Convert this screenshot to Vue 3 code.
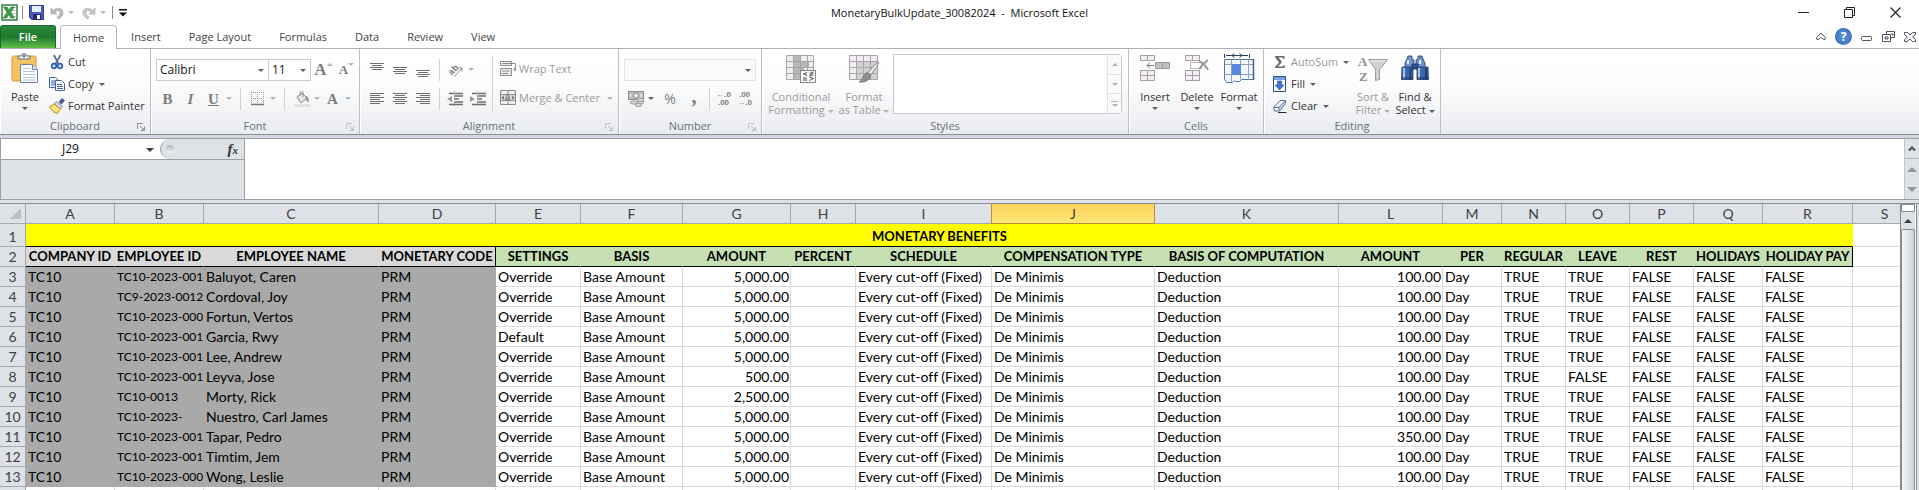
<template>
  <div class="xl-app">
    <header class="title-bar">
      <div class="quick-access">
        <svg class="xl-logo" width="17" height="17" viewBox="0 0 17 17" aria-hidden="true">
          <rect x="1" y="1" width="15" height="15" fill="#fff" stroke="#1d7a38" stroke-width="1.4" />
          <path d="M10 3.5h5M10 6.5h5M10 9.5h5M10 12.5h5" stroke="#a9cfae" />
          <path d="M2.500 3h3.600l1.900 3.200L10 3h3.200L9.800 8.300l3.600 5.700H9.800L7.800 10.500 5.700 14H2.300l3.700-5.700z" fill="#3f9f3f" stroke="#16692f" stroke-width=".6" />
        </svg>
        <i class="qa-sep"></i>
        <button type="button" class="qa-btn" aria-label="Save">
          <svg width="15" height="15" viewBox="0 0 15 15">
            <path d="M.5.5h14v14h-12l-2-2z" fill="#4a58c4" stroke="#303b94" />
            <rect x="3" y="1" width="9" height="6" fill="#e8f0fb" />
            <rect x="4" y="9" width="8" height="6" fill="#252c66" />
            <rect x="8" y="10" width="3" height="4" fill="#fff" />
          </svg>
        </button>
        <button type="button" class="qa-btn qa-undo" aria-label="Undo">
          <svg width="14" height="14" viewBox="0 0 14 14">
            <path d="M1 2v6h6L5 6c2-2 5-1.500 5 1 0 2-1.500 3-3 4l1.500 2C11 11.500 13 10 13 6.500 13 2 7.500.500 3.300 4.300z" fill="#b9bbbe" stroke="#a3a5a9" stroke-width=".6" />
          </svg>
          <i class="caret off"></i>
        </button>
        <button type="button" class="qa-btn qa-undo" aria-label="Redo">
          <svg width="14" height="14" viewBox="0 0 14 14">
            <path d="M13 2v6H7l2-2C7 4 4 4.500 4 7c0 2 1.500 3 3 4l-1.500 2C3 11.500 1 10 1 6.500 1 2 6.500.500 10.700 4.300z" fill="#c6c8ca" stroke="#a3a5a9" stroke-width=".6" />
          </svg>
          <i class="caret off"></i>
        </button>
        <i class="qa-sep"></i>
        <button type="button" class="qa-btn" aria-label="Customize Quick Access Toolbar">
          <svg width="8" height="8" viewBox="0 0 8 8"><path d="M0 0h8v1.500H0zM0 3.500h8L4 7.500z" fill="#111" /></svg>
        </button>
      </div>
      <h1 class="doc-title">MonetaryBulkUpdate_30082024&nbsp; -&nbsp; Microsoft Excel</h1>
      <div class="win-controls">
        <button type="button" aria-label="Minimize"><svg width="11" height="11"><path d="M0 5.500h11" stroke="#222" /></svg></button>
        <button type="button" aria-label="Restore">
          <svg width="11" height="11" fill="none" stroke="#222"><path d="M.5 2.500h8v8h-8zM2.500 2.500v-2h8v8h-2" /></svg>
        </button>
        <button type="button" aria-label="Close"><svg width="11" height="11"><path d="M.5.500l10 10M10.500.500l-10 10" stroke="#222" stroke-width="1.200" /></svg></button>
      </div>
    </header>

    <nav class="tab-row">
      <button type="button" class="tab tab-file">File</button>
      <button v-for="t in tabs" :key="t" type="button" class="tab" :class="{ active: t === activeTab }" @click="activeTab = t">{{ t }}</button>
      <div class="doc-controls">
        <button type="button" aria-label="Minimize the Ribbon">
          <svg width="10" height="9" viewBox="0 0 10 9"><path d="M.7 5.300L5 1l4.300 4.300v2H7L5 5.300 3 7.300H.7z" fill="#fff" stroke="#4c5560" /></svg>
        </button>
        <button type="button" class="help" aria-label="Help">?</button>
        <button type="button" aria-label="Minimize window">
          <svg width="12" height="9" viewBox="0 0 12 9"><rect x=".5" y="4.500" width="10" height="4" rx="1" fill="#fff" stroke="#4c5560" /></svg>
        </button>
        <button type="button" aria-label="Restore window">
          <svg width="13" height="11" viewBox="0 0 13 11" fill="#fff" stroke="#4c5560"><path d="M4.500.5h8v6h-8z" /><path d="M.5 3.500h8v7h-8z" /><path d="M3 6h3v2H3z" /><path d="M9 3h2v2" /></svg>
        </button>
        <button type="button" aria-label="Close window">
          <svg width="12" height="10" viewBox="0 0 12 10"><path d="M.5.5h3L6 3 8.500.5h3v2L8.500 5l3 2.500v2h-3L6 7 3.500 9.500h-3v-2L3.500 5l-3-2.500z" fill="#fff" stroke="#4c5560" /></svg>
        </button>
      </div>
    </nav>

    <section class="ribbon">
      <div class="group g-clipboard">
        <div class="group-body">
          <button type="button" class="big">
            <svg width="28" height="32" viewBox="0 0 28 32">
              <rect x="1" y="4" width="24" height="25" rx="1.500" fill="#f3c366" stroke="#d99a3a" />
              <path d="M7 7V4h3c0-3 6-3 6 0h3v3z" fill="#dfe3e8" stroke="#6b7480" />
              <circle cx="13" cy="4" r="1.200" fill="#5c6570" />
              <path d="M9.500 12.500h12l5 5v13h-17z" fill="#fbfcff" stroke="#6f87a6" />
              <path d="M21.500 12.500v5h5" fill="#d6e2f2" stroke="#6f87a6" />
              <path d="M12 16.500h7M12 19.500h12M12 22.500h12M12 25.500h12M12 28h12" stroke="#b7c6da" />
            </svg>
            <span>Paste</span>
            <i class="caret"></i>
          </button>
          <div class="stack">
            <button type="button" class="small">
              <svg width="16" height="16" viewBox="0 0 16 16">
                <path d="M5 1l4.500 9M11.500 1L6.500 10" stroke="#5d7188" stroke-width="1.800" />
                <circle cx="5" cy="12" r="2.300" fill="#dbe7f8" stroke="#2a5db0" stroke-width="1.700" />
                <circle cx="11" cy="12" r="2.300" fill="#dbe7f8" stroke="#2a5db0" stroke-width="1.700" />
              </svg>
              <span>Cut</span>
            </button>
            <button type="button" class="small">
              <svg width="16" height="16" viewBox="0 0 16 16" stroke="#3b66a8">
                <path d="M.5 1.500h6l3 3v7h-9z" fill="#eef4fc" /><path d="M2 5h4M2 7h4M2 9h4" />
                <path d="M6.500 4.500h6l3 3v7h-9z" fill="#fff" /><path d="M8 8.500h5M8 10.500h6M8 12.500h6" />
              </svg>
              <span>Copy</span><i class="caret"></i>
            </button>
            <button type="button" class="small">
              <svg width="16" height="16" viewBox="0 0 16 16">
                <path d="M10 4l3-3.500 2.500 2L12.500 6z" fill="#4c5ea5" stroke="#36437b" stroke-width=".7" />
                <path d="M7 3.500l6.500 5-2 2.500L5 6z" fill="#d7d9de" stroke="#666d78" stroke-width=".7" />
                <path d="M5 6l6.500 5-3 4.500C5 15 2 12.500.5 8.500z" fill="#f6dc62" stroke="#ab8a20" stroke-width=".8" />
                <path d="M3 9l4.500 4.500M5 8l5 4" stroke="#fff6bd" />
              </svg>
              <span>Format Painter</span>
            </button>
          </div>
        </div>
        <div class="group-label">Clipboard<button type="button" class="launcher" aria-label="Clipboard options"><svg width="8" height="8"><path :d="launcherPath" /></svg></button></div>
      </div>

      <div class="group g-font">
        <div class="group-body rows">
          <div class="row">
            <div class="combo font-name">
              <select aria-label="Font"><option>Calibri</option></select><i class="caret"></i>
            </div>
            <div class="combo font-size">
              <select aria-label="Font size"><option>11</option></select><i class="caret"></i>
            </div>
            <button type="button" class="tool glyph grow" aria-label="Increase font size"><b>A</b><i class="caret up off"></i></button>
            <button type="button" class="tool glyph shrink" aria-label="Decrease font size"><b>A</b><i class="caret off"></i></button>
          </div>
          <div class="row">
            <button type="button" class="tool glyph"><b>B</b></button>
            <button type="button" class="tool glyph"><b><em>I</em></b></button>
            <button type="button" class="tool glyph"><b><u>U</u></b></button>
            <i class="caret off"></i>
            <i class="v-sep"></i>
            <button type="button" class="tool" aria-label="Borders">
              <svg width="14" height="14" viewBox="0 0 14 14"><path d="M.5 0v12M6.500 0v12M12.500 0v12M0 .5h13M0 6.500h13" stroke="#999" stroke-dasharray="1 1" /><path d="M0 12.500h13" stroke="#777" stroke-width="1.500" /></svg>
            </button>
            <i class="caret off"></i>
            <i class="v-sep"></i>
            <button type="button" class="tool" aria-label="Fill color">
              <svg width="16" height="16" viewBox="0 0 16 16">
                <path d="M3 6l5-4 5 5-6 5z" fill="#e6e6e6" stroke="#888" />
                <path d="M6 5V1.500c0-1.500 3-1.500 3 0V6" fill="none" stroke="#888" />
                <path d="M12 5c3 1 3 4 2.500 7-1.500-1-1-3-3-4z" fill="#8f8f8f" />
                <path d="M0 13h16v3H0z" fill="#e6dfe6" />
              </svg>
            </button>
            <i class="caret off"></i>
            <button type="button" class="tool glyph" aria-label="Font color"><b>A</b></button>
            <i class="caret off"></i>
          </div>
        </div>
        <div class="group-label">Font<button type="button" class="launcher off" aria-label="Font options"><svg width="8" height="8"><path :d="launcherPath" /></svg></button></div>
      </div>

      <div class="group g-align">
        <div class="group-body">
          <div class="align-rows">
            <div class="row">
              <button v-for="a in vAligns" :key="a.name" type="button" class="tool" :aria-label="a.name">
                <svg width="15" height="16"><path :d="a.d" stroke="#6f6f6f" /></svg>
              </button>
              <i class="v-sep"></i>
              <button type="button" class="tool" aria-label="Orientation">
                <svg width="17" height="16" viewBox="0 0 17 16"><text x="1" y="11" transform="rotate(-45 6 8)" class="ab">ab</text><path d="M7 15L15 6M15 6h-3.500M15 6v3.500" fill="none" stroke="#8c8c8c" /></svg>
              </button>
              <i class="caret off"></i>
            </div>
            <div class="row">
              <button v-for="a in hAligns" :key="a.name" type="button" class="tool" :aria-label="a.name">
                <svg width="15" height="16"><path :d="a.d" stroke="#6f6f6f" /></svg>
              </button>
              <i class="v-sep"></i>
              <button type="button" class="tool" aria-label="Decrease indent">
                <svg width="17" height="16" viewBox="0 0 17 16"><path d="M2 2.500h14M7 5h9M7 8h5M7 11h9M2 13.500h14" stroke="#6f6f6f" stroke-width="1.500" /><path d="M7.500 0v16" stroke="#aaa" stroke-dasharray="1 1" /><path d="M5 5v6L0 8z" fill="#9a9a9a" /></svg>
              </button>
              <button type="button" class="tool" aria-label="Increase indent">
                <svg width="17" height="16" viewBox="0 0 17 16"><path d="M2 2.500h14M7 5h9M7 8h5M7 11h9M2 13.500h14" stroke="#6f6f6f" stroke-width="1.500" /><path d="M7.500 0v16" stroke="#aaa" stroke-dasharray="1 1" /><path d="M0 5v6l5-3z" fill="#9a9a9a" /></svg>
              </button>
            </div>
          </div>
          <i class="v-sep tall"></i>
          <div class="wrap-rows">
            <button type="button" class="small off">
              <svg width="17" height="16" viewBox="0 0 17 16" fill="#eee" stroke="#8d8d8d"><path d="M.5.500h11v4H.5zM.5 7.500h11v7H.5z" /><path d="M2 2.500h13.500M2 10h8M2 12.500h6" /><path d="M15.500 3v6.500l-2.500-1M15.500 9.500l-1-3" fill="none" /></svg>
              <span>Wrap Text</span>
            </button>
            <button type="button" class="small off">
              <svg width="17" height="16" viewBox="0 0 17 16"><path d="M.5.500h15v14H.5z" fill="#ededed" stroke="#8d8d8d" /><path d="M.5 4.500h15M.5 10.500h15M8 .5v4M8 10.500v4" stroke="#8d8d8d" /><path d="M1 5h14v5H1z" fill="#d5d5d5" /><path d="M4 6v3.500L1.500 7.700zM12 6v3.500l2.500-1.800z" fill="#666" /><text x="5" y="10" class="ab">a</text></svg>
              <span>Merge &amp; Center</span><i class="caret off"></i>
            </button>
          </div>
        </div>
        <div class="group-label">Alignment<button type="button" class="launcher off" aria-label="Alignment options"><svg width="8" height="8"><path :d="launcherPath" /></svg></button></div>
      </div>

      <div class="group g-number">
        <div class="group-body rows">
          <div class="row">
            <div class="combo off">
              <select aria-label="Number format"><option></option></select><i class="caret"></i>
            </div>
          </div>
          <div class="row">
            <button type="button" class="tool" aria-label="Accounting format">
              <svg width="17" height="16" viewBox="0 0 17 16"><rect x=".5" y=".5" width="15" height="8" fill="#bcbcbc" stroke="#8c8c8c" /><circle cx="8" cy="4.500" r="2.500" fill="#ececec" stroke="#888" /><path d="M2.500 3v3M13 3v3" stroke="#fff" /><g fill="#ddd" stroke="#999"><ellipse cx="10.500" cy="14" rx="3.500" ry="1.500" /><ellipse cx="5.500" cy="11.500" rx="3.500" ry="1.500" /><ellipse cx="12.500" cy="11" rx="3.500" ry="1.500" /><ellipse cx="12.500" cy="9" rx="3.500" ry="1.500" /></g></svg>
            </button>
            <i class="caret"></i>
            <button type="button" class="tool sign">%</button>
            <button type="button" class="tool glyph comma"><b>,</b></button>
            <i class="v-sep"></i>
            <button type="button" class="tool dec" aria-label="Increase decimal"><span>←.0</span><span>.00</span></button>
            <button type="button" class="tool dec" aria-label="Decrease decimal"><span>.00</span><span>→.0</span></button>
          </div>
        </div>
        <div class="group-label">Number<button type="button" class="launcher off" aria-label="Number options"><svg width="8" height="8"><path :d="launcherPath" /></svg></button></div>
      </div>

      <div class="group g-styles">
        <div class="group-body">
          <button type="button" class="big wide off">
            <svg width="32" height="32" viewBox="0 0 32 32">
              <path d="M1.500 3.500h27v24h-27z" fill="#f1ecf1" />
              <path d="M8 4h7v23H8zM15 10h9v5h-9zM15 15h4v6h-4z" fill="#b9b6b9" />
              <path d="M1.500 3.500h27v24h-27zM8.500 3.500v24M15.500 3.500v24M22.500 3.500v24M1.500 9.500h27M1.500 15.500h27M1.500 21.500h27" fill="none" stroke="#a9a6a9" />
              <rect x="15.500" y="18.500" width="15" height="12" fill="#f5f5f5" stroke="#8a8a8a" />
              <path d="M22 20.500l-3.500 1.500 3.500 1.500M18 26h4M18 28h4M24.500 21h4M24.500 23h4M28 19.500l-3 5M24.500 25l4 1.500-4 2" fill="none" stroke="#555" />
            </svg>
            <span>Conditional</span>
            <span>Formatting <i class="caret off"></i></span>
          </button>
          <button type="button" class="big off">
            <svg width="32" height="32" viewBox="0 0 32 32">
              <path d="M1.500 3.500h28v24h-28z" fill="#f1ecf1" />
              <path d="M9 10h20v17H9z" fill="#d2d0d2" />
              <path d="M1.500 3.500h28v24h-28zM8.500 3.500v24M15.500 3.500v24M22.500 3.500v24M1.500 9.500h28M1.500 15.500h28M1.500 21.500h28" fill="none" stroke="#a9a6a9" />
              <path d="M30.500 10l-1 4-7 9-3-2.500 8-8.500z" fill="#e5e5e5" stroke="#888" />
              <path d="M19.500 20.500l3 2.500c0 5-5 7.500-11.500 7 4-1.500 3-7 8.500-9.500z" fill="#8e8e8e" stroke="#7b7b7b" />
            </svg>
            <span>Format</span>
            <span>as Table <i class="caret off"></i></span>
          </button>
          <div class="gallery">
            <div class="gallery-view"></div>
            <div class="gallery-nav">
              <button type="button" aria-label="Previous styles"><i class="caret up off"></i></button>
              <button type="button" aria-label="Next styles"><i class="caret off"></i></button>
              <button type="button" aria-label="More styles"><i class="bar"></i><i class="caret off"></i></button>
            </div>
          </div>
        </div>
        <div class="group-label">Styles</div>
      </div>

      <div class="group g-cells">
        <div class="group-body">
          <button type="button" class="big">
            <svg width="32" height="32" viewBox="0 0 32 32" fill="#f4eef4" stroke="#a39fa3">
              <path d="M1.500 3.500h14v5h-14zM8.500 3.500v5M1.500 18.500h14v10h-14zM8.500 18.500v10M1.500 23.500h14" />
              <path d="M16.500 10.500h14v6h-14zM23.500 10.500v6" fill="#c1bdc1" stroke="#999" />
              <path d="M8 13.500h7M11 10.500l-3 3 3 3" fill="none" stroke="#777" />
            </svg>
            <span>Insert</span>
            <i class="caret"></i>
          </button>
          <button type="button" class="big">
            <svg width="32" height="32" viewBox="0 0 32 32" fill="#f4eef4" stroke="#a39fa3">
              <path d="M4.500 3.500h14v5h-14zM11.500 3.500v5M4.500 18.500h14v10h-14zM11.500 18.500v10M4.500 23.500h14" />
              <path d="M9.500 10.500h11v6h-11z" stroke="#777" stroke-dasharray="1 1" fill="none" />
              <path d="M18 9c4 2 7 5 9 9M27 8c-4 3-7 6-9 9" fill="none" stroke="#9b9b9b" stroke-width="2" />
            </svg>
            <span>Delete</span>
            <i class="caret"></i>
          </button>
          <button type="button" class="big">
            <svg width="32" height="32" viewBox="0 0 32 32">
              <path d="M1.500 2v4M26.500 2v4M3 3.500h6M19 3.500h6" stroke="#2c3e5c" />
              <path d="M9 3.500h12M11.500 1.500L9 3.500l2.500 2M16.500 1.500l2.500 2-2.500 2" fill="none" stroke="#2c3e5c" />
              <path d="M1.500 7.500h29v20h-12l-2 2h-4l-1-1-2 2h-6l-2-3z" fill="#f3f7fd" stroke="#54749f" />
              <path d="M8.500 7.500v22M17.500 7.500v20M25.500 7.500v20M1.500 12.500h29M1.500 22.500h29" stroke="#8ba2c0" />
              <path d="M9 12h9v11H9z" fill="#5b86e0" />
              <path d="M30.500 7v21" stroke="#3f5f8d" stroke-width="1.500" />
            </svg>
            <span>Format</span>
            <i class="caret"></i>
          </button>
        </div>
        <div class="group-label">Cells</div>
      </div>

      <div class="group g-editing">
        <div class="group-body">
          <div class="stack">
            <button type="button" class="small off">
              <svg width="16" height="16" viewBox="0 0 16 16"><path d="M3 2h9.500v3h-1C11 4 10.500 3.500 9.500 3.500H6.500L10 8l-4 4.500h4c1 0 1.500-.5 2-1.500h1l-.5 3H3v-1l4-4.500L3 3z" fill="#6b6b6b" /></svg>
              <span>AutoSum</span><i class="caret"></i>
            </button>
            <button type="button" class="small">
              <svg width="16" height="16" viewBox="0 0 16 16"><path d="M1.500.500h12v15h-12z" fill="#fdfeff" stroke="#2b4c86" /><path d="M2 1h11v3H2z" fill="#7ba0dd" /><path d="M5.500 5h4v4H12l-4.500 5L3 9h2.500z" fill="#3e75d6" stroke="#1f4ea3" stroke-width=".6" /></svg>
              <span>Fill</span><i class="caret"></i>
            </button>
            <button type="button" class="small">
              <svg width="16" height="16" viewBox="0 0 16 16"><path d="M1.500 9.500L8 2.500h5.500v3L7.500 13h-5z" fill="#f3f6fb" stroke="#5c7192" /><path d="M1.500 9.500h5.500l6.500-7M7 9.500l.5 3.500" fill="none" stroke="#5c7192" /><path d="M7 9.500l6.500-7v3L7.500 13z" fill="#bccbe0" stroke="#5c7192" stroke-width=".6" /><path d="M6 14.500h8.500" stroke="#222" /></svg>
              <span>Clear</span><i class="caret"></i>
            </button>
          </div>
          <button type="button" class="big off">
            <svg width="32" height="32" viewBox="0 0 32 32">
              <text x="1" y="14" class="az">A</text><text x="2" y="29" class="az">Z</text>
              <path d="M11.500 7.500h19l-8 10v10l-4 1V17.500z" fill="#d3d0d3" stroke="#9c999c" /><path d="M13 9h15" stroke="#f2f2f2" />
            </svg>
            <span>Sort &amp;</span>
            <span>Filter <i class="caret off"></i></span>
          </button>
          <button type="button" class="big">
            <svg width="32" height="32" viewBox="0 0 32 32">
              <g stroke="#1d3566" stroke-width=".8">
                <path d="M9 4h4v3l2 1v9H6V11l2-4zM19 4h4l1 3 2 4v6h-9V8l2-1z" fill="#6e93cd" />
                <path d="M13 12h6v5h-6z" fill="#30528f" />
                <path d="M3 15h11v12.500H2.500zM18 15h11l.5 12.500H18z" fill="#3e68ad" />
              </g>
              <path d="M5 16v11M20 16v11" stroke="#a9c4ee" stroke-width="2" />
              <path d="M11.500 16v11M27 16v11" stroke="#1f3d77" stroke-width="2" />
              <path d="M9 8v4M21 8v4" stroke="#dbe8fb" stroke-width="2" />
              <path d="M2.500 26h11.500M18 26h11.500" stroke="#1b315d" />
            </svg>
            <span>Find &amp;</span>
            <span>Select <i class="caret"></i></span>
          </button>
        </div>
        <div class="group-label">Editing</div>
      </div>
    </section>

    <section class="formula-bar">
      <div class="name-area">
        <div class="name-row">
          <input v-model="cellRef" class="name-box" type="text" aria-label="Name box" />
          <button type="button" class="name-drop" aria-label="Named ranges"><i class="caret dark"></i></button>
          <div class="fx-pill">
            <i class="dimple"></i>
            <button type="button" class="fx" aria-label="Insert function">f<small>x</small></button>
          </div>
        </div>
      </div>
      <textarea class="formula-input" aria-label="Formula"></textarea>
      <div class="formula-side">
        <button type="button" class="collapse" aria-label="Collapse formula bar"><svg width="8" height="5"><path d="M1 4.500l3-3 3 3" fill="none" stroke="#4a4f56" stroke-width="2" /></svg></button>
        <button type="button" aria-label="Scroll up"><i class="caret up teal"></i></button>
        <button type="button" aria-label="Scroll down"><i class="caret teal"></i></button>
      </div>
    </section>

    <main class="sheet">
      <div class="grid-wrap">
        <table class="grid">
          <colgroup>
            <col class="c-head" />
            <col v-for="c in columns" :key="c.id" :style="c.width ? { width: c.width + 'px' } : null" />
          </colgroup>
          <thead>
            <tr>
              <th class="corner"><svg width="11" height="11" aria-hidden="true"><path d="M11 0v11H0z" fill="#b9bec5" /></svg></th>
              <th v-for="c in columns" :key="c.id" scope="col" :class="{ picked: c.id === 'J' }">{{ c.id }}</th>
            </tr>
          </thead>
          <tbody>
            <tr class="banner">
              <th scope="row">1</th>
              <td colspan="18">MONETARY BENEFITS</td>
              <td></td>
            </tr>
            <tr class="titles">
              <th scope="row">2</th>
              <td v-for="(t, i) in titles" :key="i" :class="i < 4 ? 'locked' : 'open'">{{ t }}</td>
              <td></td>
            </tr>
            <tr v-for="(r, n) in rows" :key="n">
              <th scope="row">{{ n + 3 }}</th>
              <td v-for="(v, i) in r" :key="i" :class="{ locked: i < 4, code: i === 1, num: i === 6 || i === 11 }">{{ v }}</td>
              <td></td>
            </tr>
            <tr>
              <th scope="row"></th>
              <td v-for="c in columns" :key="c.id"></td>
            </tr>
          </tbody>
        </table>
      </div>
      <div class="v-scroll">
        <div class="split"></div>
        <button type="button" aria-label="Scroll sheet up"><i class="caret up dark"></i></button>
        <div class="thumb"></div>
      </div>
    </main>
  </div>
</template>

<script setup>
import { ref } from 'vue';

const tabs = ['Home', 'Insert', 'Page Layout', 'Formulas', 'Data', 'Review', 'View'];
const activeTab = ref('Home');
const cellRef = ref('J29');

const launcherPath = 'M.5 6V.5H6M3 3l4 4M7.500 3.500v4h-4M5 7h2V5';

const vAligns = [
  { name: 'Top align', d: 'M0 1.500h14M2 3.500h10M0 5.500h14M2 7.500h10' },
  { name: 'Middle align', d: 'M0 5.500h14M2 7.500h10M0 9.500h14M2 11.500h10' },
  { name: 'Bottom align', d: 'M0 8.500h14M2 10.500h10M0 12.500h14M2 14.500h10' }
];

const hAligns = [
  { name: 'Align left', d: 'M0 2.500h14M0 4.500h10M0 6.500h14M0 8.500h10M0 10.500h14M0 12.500h10' },
  { name: 'Center', d: 'M0 2.500h14M2 4.500h10M0 6.500h14M2 8.500h10M0 10.500h14M2 12.500h10' },
  { name: 'Align right', d: 'M0 2.500h14M4 4.500h10M0 6.500h14M4 8.500h10M0 10.500h14M4 12.500h10' }
];

// the last column takes whatever width is left
const widths = [89, 89, 175, 117, 85, 102, 108, 65, 136, 163, 184, 104, 59, 64, 64, 64, 69, 90, 0];
const columns = widths.map((width, i) => ({ id: String.fromCharCode(65 + i), width }));

const titles = [
  'COMPANY ID', 'EMPLOYEE ID', 'EMPLOYEE NAME', 'MONETARY CODE', 'SETTINGS', 'BASIS', 'AMOUNT', 'PERCENT', 'SCHEDULE',
  'COMPENSATION TYPE', 'BASIS OF COMPUTATION', 'AMOUNT', 'PER', 'REGULAR', 'LEAVE', 'REST', 'HOLIDAYS', 'HOLIDAY PAY'
];

const employees = [
  { id: 'TC10-2023-001', name: 'Baluyot, Caren' },
  { id: 'TC9-2023-0012', name: 'Cordoval, Joy' },
  { id: 'TC10-2023-000', name: 'Fortun, Vertos' },
  { id: 'TC10-2023-001', name: 'Garcia, Rwy', setting: 'Default' },
  { id: 'TC10-2023-001', name: 'Lee, Andrew' },
  { id: 'TC10-2023-001', name: 'Leyva, Jose', amount: '500.00', leave: 'FALSE' },
  { id: 'TC10-0013', name: 'Morty, Rick', amount: '2,500.00' },
  { id: 'TC10-2023-', name: 'Nuestro, Carl James' },
  { id: 'TC10-2023-001', name: 'Tapar, Pedro', limit: '350.00' },
  { id: 'TC10-2023-001', name: 'Timtim, Jem' },
  { id: 'TC10-2023-000', name: 'Wong, Leslie' }
];

const rows = employees.map((e) => [
  'TC10', e.id, e.name, 'PRM', e.setting || 'Override', 'Base Amount', e.amount || '5,000.00', '',
  'Every cut-off (Fixed)', 'De Minimis', 'Deduction', e.limit || '100.00', 'Day', 'TRUE', e.leave || 'TRUE',
  'FALSE', 'FALSE', 'FALSE'
]);
</script>

<style>
body {
  margin: 0;
  background: #fff;
}
</style>

<style scoped>
.xl-app {
  display: flex;
  flex-direction: column;
  height: 100vh;
  overflow: hidden;
  font-family: "Open Sans", "Noto Sans", sans-serif;
  font-size: 11px;
  line-height: 16px;
  color: #3b3b3b;
  background: #fff;
}

.xl-app *,
.xl-app *::before {
  box-sizing: border-box;
}

button,
select,
input,
textarea {
  font: inherit;
  color: inherit;
  margin: 0;
  padding: 0;
  border: 0;
  background: none;
  border-radius: 0;
}

svg {
  display: block;
  flex-shrink: 0;
}

.caret {
  display: inline-block;
  flex-shrink: 0;
  width: 0;
  height: 0;
  border: 3px solid transparent;
  border-bottom-width: 0;
  border-top-color: #5f5f5f;
}

.caret.off {
  border-top-color: #b4b4b4;
}

.caret.dark {
  border-width: 4px 4px 0;
  border-top-color: #3d3d3d;
}

.caret.teal {
  border-width: 5px 5px 0;
  border-top-color: #8a9a9d;
}

.caret.up {
  transform: rotate(180deg);
}

/* title bar */
.title-bar {
  display: grid;
  grid-template-columns: 1fr auto 1fr;
  align-items: center;
  height: 25px;
  flex-shrink: 0;
}

.quick-access {
  display: flex;
  align-items: center;
  gap: 6px;
  padding-left: 1px;
}

.qa-sep {
  width: 1px;
  height: 13px;
  margin-left: -2px;
  background: #8a8a8a;
}

.qa-btn {
  display: flex;
  align-items: center;
  gap: 4px;
}

.qa-undo {
  margin-right: 2px;
}

.doc-title {
  margin: 0;
  font-size: 11px;
  font-weight: 400;
  color: #111;
}

.win-controls {
  display: flex;
  justify-content: flex-end;
  gap: 35px;
  padding-right: 18px;
}

/* tabs */
.tab-row {
  display: flex;
  align-items: stretch;
  height: 24px;
  flex-shrink: 0;
  border-bottom: 1px solid #a9b0b6;
}

.tab {
  padding: 0 14px;
  color: #444;
}

.tab.active {
  margin: 0 0 -1px 4px;
  padding: 0 12px;
  border: 1px solid #b5bac0;
  border-bottom: 0;
  border-radius: 4px 4px 0 0;
  background: #fff;
}

.tab-file {
  width: 56px;
  font-weight: 600;
  color: #fff;
  border: 1px solid #17692f;
  border-bottom: 0;
  border-radius: 3px 3px 0 0;
  background: linear-gradient(#2c8a3c, #1f7a2f 50%, #5fbf45);
}

.doc-controls {
  display: flex;
  align-items: center;
  gap: 9px;
  margin-left: auto;
  padding-right: 3px;
}

.help {
  width: 17px;
  height: 17px;
  border-radius: 50%;
  font-size: 12px;
  font-weight: 700;
  line-height: 17px;
  color: #fff;
  background: radial-gradient(#5f97e0, #2f63b5);
}

/* ribbon */
.ribbon {
  display: flex;
  height: 86px;
  flex-shrink: 0;
  border-bottom: 1px solid #8a8f97;
  background: linear-gradient(#fff, #fdfdfd 40%, #e9ebef);
}

.group {
  display: flex;
  flex-direction: column;
  flex-shrink: 0;
  border-right: 1px solid #bcc0c6;
  box-shadow: inset 1px 0 #fff;
}

.g-clipboard { width: 151px; }
.g-font { width: 209px; }
.g-align { width: 259px; }
.g-number { width: 143px; }
.g-styles { width: 367px; }
.g-cells { width: 135px; }
.g-editing { width: 177px; }

.group-body {
  display: flex;
  flex: 1;
  padding: 2px 5px 0;
}

.group-body.rows {
  flex-direction: column;
}

.group-label {
  position: relative;
  height: 16px;
  line-height: 15px;
  text-align: center;
  color: #6a707c;
}

.launcher {
  position: absolute;
  right: 5px;
  top: 5px;
}

.launcher svg {
  fill: none;
  stroke: #8d929a;
}

.launcher.off svg {
  stroke: #bfc2c7;
}

.big {
  display: flex;
  flex-direction: column;
  align-items: center;
  flex-shrink: 0;
  width: 42px;
  padding-top: 1px;
  line-height: 13px;
  white-space: nowrap;
  color: #333;
}

.big svg {
  margin-bottom: 6px;
}

.big > .caret {
  margin-top: 4px;
}

.big span .caret {
  vertical-align: middle;
}

.big.off,
.small.off {
  color: #9b9b9b;
}

.stack {
  display: flex;
  flex-direction: column;
  align-items: flex-start;
  flex-shrink: 0;
}

.small {
  display: flex;
  align-items: center;
  gap: 3px;
  height: 22px;
  color: #333;
  white-space: nowrap;
}

.small .caret {
  margin-left: 2px;
}

.row {
  display: flex;
  align-items: center;
  height: 29px;
}

.rows .row:first-child,
.align-rows .row:first-child {
  margin-top: 4px;
}

.tool {
  display: flex;
  align-items: center;
  justify-content: center;
  flex-shrink: 0;
  width: 23px;
  height: 22px;
  color: #7d7d7d;
}

.glyph {
  font-family: "Liberation Serif", serif;
  font-size: 15px;
}

.v-sep {
  flex-shrink: 0;
  width: 1px;
  height: 22px;
  margin: 0 8px;
  background: #cfd3d9;
}

.v-sep.tall {
  height: 56px;
  margin: 5px 7px 0 0;
}

.combo {
  position: relative;
  flex-shrink: 0;
  width: 100%;
  height: 22px;
  border: 1px solid #c9ced6;
  background: #fff;
}

.combo select {
  width: 100%;
  height: 20px;
  padding-left: 3px;
  appearance: none;
  font-size: 12px;
  color: #111;
}

.combo .caret {
  position: absolute;
  right: 4px;
  top: 9px;
  pointer-events: none;
}

.combo.off {
  border-color: #dfe2ea;
  background: #fafafa;
}

.font-name {
  width: 113px;
}

.font-size {
  width: 43px;
  margin: 0 1px 0 -1px;
}

.g-font .group-body {
  padding-right: 0;
}

.grow {
  font-size: 17px;
}

.shrink {
  font-size: 13px;
}

.shrink .caret,
.grow .caret {
  margin-bottom: 10px;
}

.g-font .row > .caret {
  margin: 0 1px;
}

.g-font .v-sep {
  margin: 0 5px 0 7px;
}

.g-align .group-body {
  padding-left: 6px;
}

.align-rows {
  flex-shrink: 0;
  width: 126px;
}

.align-rows .v-sep {
  margin: 0 4px;
}

.align-rows .row > .caret {
  margin-left: 1px;
}

.wrap-rows {
  display: flex;
  flex-direction: column;
  gap: 7px;
  padding-top: 7px;
}

.wrap-rows .small {
  gap: 2px;
}

.wrap-rows .caret {
  margin-left: 5px;
}

.ab {
  font: 700 9px "Liberation Sans", sans-serif;
  fill: #777;
}

.az {
  font: 700 13px "Liberation Serif", serif;
  fill: #8f8f8f;
}

.sign {
  font-size: 14px;
}

.g-number .tool {
  width: 24px;
}

.g-number .row > .caret {
  margin-right: 4px;
}

.g-number .v-sep {
  margin: 0 3px;
}

.comma {
  font-size: 20px;
  line-height: 12px;
}

.g-number .comma b {
  margin-bottom: 6px;
}

.g-number .dec {
  flex-direction: column;
  width: 21px;
  font-family: "Liberation Sans", sans-serif;
  font-size: 8px;
  font-weight: 700;
  line-height: 8px;
}

/* group contents */
.g-clipboard .group-body {
  padding-left: 4px;
}

.g-clipboard .stack {
  padding-left: 3px;
}

.g-styles .group-body {
  padding: 2px 6px 0 3px;
}

.g-styles .big {
  width: 54px;
}

.g-styles .big.wide {
  width: 72px;
}

.gallery {
  display: flex;
  flex: 1;
  height: 60px;
  margin: 3px 0 0 2px;
  border: 1px solid #c5c9cc;
  border-radius: 0 3px 3px 0;
}

.gallery-view {
  flex: 1;
  background: #fff;
}

.gallery-nav {
  display: flex;
  flex-direction: column;
  width: 14px;
  background: #fafafa;
  border-left: 1px solid #dfe2e6;
}

.gallery-nav button {
  display: flex;
  flex: 1;
  flex-direction: column;
  align-items: center;
  justify-content: center;
  gap: 2px;
}

.gallery-nav button + button {
  border-top: 1px solid #dfe2e6;
}

.bar {
  width: 7px;
  height: 1px;
  background: #b4b4b4;
}

.g-editing .group-body {
  padding-left: 8px;
}

.g-editing .stack {
  width: 80px;
}

/* formula bar */
.formula-bar {
  display: flex;
  height: 68px;
  flex-shrink: 0;
  border-top: 3px solid #d3d6dc;
  border-bottom: 3px solid #dfe2e9;
  box-shadow: inset 0 1px #9aa0a8, inset 0 -1px #9aa0a8;
  padding: 1px 0;
  background: #dee1e6;
}

.name-area {
  width: 245px;
  border-left: 1px solid #9aa0a8;
  border-right: 1px solid #9aa0a8;
}

.name-row {
  display: flex;
  align-items: center;
  height: 21px;
  border-bottom: 1px solid #9aa0a8;
  background: #fff;
}

.name-box {
  width: 139px;
  height: 20px;
  padding-bottom: 1px;
  font-size: 12px;
  text-align: center;
  color: #111;
}

.name-drop {
  width: 20px;
  height: 20px;
}

.name-drop .caret {
  vertical-align: middle;
}

.fx-pill {
  display: flex;
  align-items: center;
  justify-content: space-between;
  flex: 1;
  height: 20px;
  padding: 0 6px 0 5px;
  border-left: 1px solid #9aa0a8;
  border-radius: 10px 0 0 10px;
  background: #dee1e6;
}

.dimple {
  width: 8px;
  height: 8px;
  border-radius: 50%;
  background: linear-gradient(#aeb3b9, #f2f4f6);
}

.fx {
  font: italic 700 15px "Liberation Serif", serif;
  color: #333;
}

.fx small {
  font-size: 11px;
}

.formula-input {
  flex: 1;
  resize: none;
  outline: none;
  background: #fff;
}

.formula-side {
  display: flex;
  flex-direction: column;
  width: 15px;
  border-left: 1px solid #c3c7cd;
}

.formula-side button {
  display: flex;
  align-items: center;
  justify-content: center;
  height: 20px;
}

.formula-side .collapse {
  border-bottom: 1px solid #b3b8bf;
}

/* sheet */
.sheet {
  display: flex;
  flex: 1;
  min-height: 0;
  border-top: 1px solid #868c95;
}

.grid-wrap {
  flex: 1;
  min-width: 0;
  overflow: hidden;
}

/* the last column runs on under the scroll bar */
.grid {
  width: calc(100% + 17px);
  table-layout: fixed;
  border-collapse: separate;
  border-spacing: 0;
  font-family: Lato, "Liberation Sans", sans-serif;
  font-size: 14px;
  font-variant-ligatures: none;
  line-height: 17px;
  color: #000;
}

.c-head {
  width: 26px;
}

.grid th,
.grid td {
  height: 20px;
  padding: 0 1px 1px 2px;
  overflow: hidden;
  white-space: nowrap;
  border-right: 1px solid #d8d9db;
  border-bottom: 1px solid #d8d9db;
}

.grid th {
  padding: 0 0 1px;
  font-weight: 400;
  text-align: center;
  color: #3f4247;
  background: #dee1e6;
  border-color: #a3a9b1;
}

.grid .corner svg {
  margin-left: 10px;
}

.grid .picked {
  background: linear-gradient(#fdd05c, #ffe873);
  border-color: #c08a35;
  box-shadow: -1px 0 #c08a35;
}

.grid .banner > * {
  height: 23px;
  padding-top: 3px;
}

.grid .banner td:nth-child(2) {
  font-size: 13px;
  font-weight: 700;
  text-align: center;
  background: #ff0;
  border-right-color: #ff0;
  border-bottom-color: #000;
}

.grid .titles td {
  padding: 0 0 1px;
  font-size: 13px;
  font-weight: 700;
  text-align: center;
}

.grid .titles .locked {
  background: #d9d9d9;
  border-color: #d9d9d9;
  border-bottom-color: #000;
}

.grid .titles .open {
  background: #c6e0b4;
  border-color: #c6e0b4;
  border-bottom-color: #000;
}

.grid .titles td:nth-child(5),
.grid .titles td:nth-child(19) {
  border-right-color: #000;
}

.grid .locked {
  background: #a9a9a9;
  border-color: #a9a9a9;
}

.grid .code {
  padding-right: 0;
  font-size: 12px;
}

.grid .num {
  text-align: right;
}

.v-scroll {
  display: flex;
  flex-direction: column;
  width: 19px;
  padding-right: 4px;
  border-left: 1px solid #868c95;
  background: linear-gradient(to right, #dee1e6 14px, #fff 14px, #fff 15px, #868c95 15px, #868c95 16px, #dee1e6 16px);
}

.split {
  height: 8px;
  border: 1px solid #868c95;
  background: #fff;
}

.v-scroll button {
  display: flex;
  align-items: center;
  justify-content: center;
  height: 17px;
}

.thumb {
  flex: 1;
  border: 1px solid #868c95;
  border-bottom: 0;
  border-radius: 2px 2px 0 0;
  background: linear-gradient(to right, #f4f6f8, #cdd2da);
}
</style>
